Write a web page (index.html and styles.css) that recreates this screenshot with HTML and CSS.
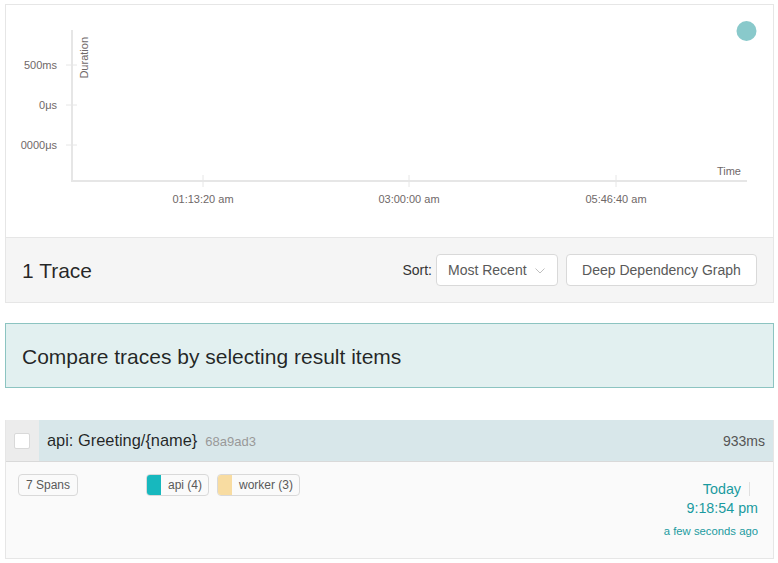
FILE: index.html
```html
<!DOCTYPE html>
<html>
<head>
<meta charset="utf-8">
<link rel="stylesheet" href="styles.css">
</head>
<body>
<div class="page">
  <section class="results-panel">
    <div class="chart">
      <svg width="767" height="232" viewBox="0 0 767 232">
        <g transform="translate(-6,-5)">
          <line x1="72" y1="30" x2="72" y2="182" class="axis"/>
          <line x1="71" y1="181" x2="747" y2="181" class="axis"/>
          <line x1="66" y1="65" x2="77" y2="65" class="tick"/>
          <line x1="66" y1="105" x2="77" y2="105" class="tick"/>
          <line x1="66" y1="145" x2="77" y2="145" class="tick"/>
          <line x1="203" y1="175" x2="203" y2="187" class="tick"/>
          <line x1="409" y1="175" x2="409" y2="187" class="tick"/>
          <line x1="616" y1="175" x2="616" y2="187" class="tick"/>
          <text x="57" y="69" text-anchor="end" class="lbl">500ms</text>
          <text x="57" y="109" text-anchor="end" class="lbl">0μs</text>
          <text x="57" y="149" text-anchor="end" class="lbl">0000μs</text>
          <text transform="translate(88,37) rotate(-90)" text-anchor="end" class="lbl">Duration</text>
          <text x="741" y="175" text-anchor="end" class="lbl">Time</text>
          <text x="203" y="203" text-anchor="middle" class="lbl">01:13:20 am</text>
          <text x="409" y="203" text-anchor="middle" class="lbl">03:00:00 am</text>
          <text x="616" y="203" text-anchor="middle" class="lbl">05:46:40 am</text>
          <circle cx="746.5" cy="31" r="10" class="dot"/>
        </g>
      </svg>
    </div>
    <div class="results-header">
      <h2 class="results-count">1 Trace</h2>
      <div class="results-actions">
        <span class="sort-label">Sort:</span>
        <div class="select">
          <span>Most Recent</span>
          <svg width="10" height="6" viewBox="0 0 10 6" class="chev"><path d="M0.5 0.5 L5 5 L9.5 0.5" fill="none" stroke="#bfbfbf" stroke-width="1"/></svg>
        </div>
        <button class="btn">Deep Dependency Graph</button>
      </div>
    </div>
  </section>

  <div class="compare-alert">Compare traces by selecting result items</div>

  <section class="trace-item">
    <div class="trace-head">
      <div class="check-col"><span class="checkbox"></span></div>
      <div class="trace-title">
        <span class="trace-name">api: Greeting/{name}</span>
        <span class="trace-id">68a9ad3</span>
      </div>
      <span class="trace-duration">933ms</span>
    </div>
    <div class="trace-body">
      <div class="col-spans"><span class="tag">7 Spans</span></div>
      <div class="col-services">
        <span class="tag svc"><i class="swatch api"></i>api (4)</span>
        <span class="tag svc"><i class="swatch worker"></i>worker (3)</span>
      </div>
      <div class="col-time">
        <div class="time-day"><span>Today</span><span class="divider"></span></div>
        <div class="time-clock">9:18:54 pm</div>
        <div class="time-ago">a few seconds ago</div>
      </div>
    </div>
  </section>
</div>
</body>
</html>
```

FILE: styles.css
```css
* { box-sizing: border-box; }
html, body { margin: 0; padding: 0; background: #fff; }
body {
  font-family: "Liberation Sans", Arial, sans-serif;
  color: rgba(0,0,0,0.85);
}
.page {
  padding: 4px 4px 0 5px;
}
.results-panel {
  border: 1px solid #e6e6e6;
  width: 769px;
}
.chart {
  height: 232px;
  background: #fff;
}
.chart svg { display: block; }
.axis { stroke: #e6e6e6; stroke-width: 2; }
.tick { stroke: #e6e6e6; stroke-width: 1; }
.lbl { font-family: "Liberation Sans", Arial, sans-serif; font-size: 11px; fill: #6f6868; }
.dot { fill: #89c9cb; }

.results-header {
  border-top: 1px solid #e6e6e6;
  background: #f5f5f5;
  height: 65px;
  display: flex;
  align-items: center;
  justify-content: space-between;
  padding: 0 16px 0 16px;
}
.results-count {
  margin: 0;
  font-size: 21px;
  font-weight: normal;
  color: rgba(0,0,0,0.85);
  padding-top: 2px;
}
.results-actions {
  display: flex;
  align-items: center;
}
.sort-label {
  font-size: 14px;
  color: #333;
  margin-right: 4px;
}
.select {
  width: 122px;
  height: 32px;
  background: #fff;
  border: 1px solid #d9d9d9;
  border-radius: 4px;
  display: flex;
  align-items: center;
  justify-content: space-between;
  padding: 0 12px 0 11px;
  font-size: 14px;
  color: #595959;
}
.chev { display: block; margin-top: 1px; }
.btn {
  margin-left: 8px;
  width: 191px;
  height: 32px;
  background: #fff;
  border: 1px solid #d9d9d9;
  border-radius: 4px;
  font-family: "Liberation Sans", Arial, sans-serif;
  font-size: 14px;
  color: #595959;
  padding: 0;
}

.compare-alert {
  margin-top: 20px;
  width: 769px;
  height: 65px;
  background: #e2f0f0;
  border: 1px solid #8cc4c1;
  display: flex;
  align-items: center;
  padding: 2px 16px 0;
  font-size: 21px;
  color: rgba(0,0,0,0.85);
}

.trace-item {
  margin-top: 32px;
  width: 769px;
  border: 1px solid #e6e6e6;
  border-top: none;
}
.trace-head {
  height: 42px;
  display: flex;
  align-items: center;
  background: #d8e7ea;
  border-bottom: 1px solid #d9d9d9;
}
.check-col {
  width: 33px;
  align-self: stretch;
  background: #ececec;
  display: flex;
  align-items: center;
  justify-content: center;
}
.checkbox {
  width: 16px;
  height: 16px;
  background: #fff;
  border: 1px solid #d9d9d9;
  border-radius: 2px;
  margin-right: 2px;
}
.trace-title {
  flex: 1;
  padding-left: 8px;
  display: flex;
  align-items: baseline;
}
.trace-name {
  font-size: 16.4px;
  color: rgba(0,0,0,0.85);
}
.trace-id {
  font-size: 13px;
  color: #999;
  margin-left: 8px;
}
.trace-duration {
  font-size: 14px;
  color: #555;
  padding-right: 8px;
}
.trace-body {
  background: #fafafa;
  height: 96px;
  display: flex;
  padding: 12px 15px 0 12px;
}
.tag {
  display: inline-flex;
  align-items: center;
  height: 22px;
  border: 1px solid #d9d9d9;
  border-radius: 4px;
  background: #fafafa;
  font-size: 12px;
  color: #595959;
  padding: 0 7px;
}
.col-spans { width: 128px; }
.col-services {
  flex: 1;
  display: flex;
  align-items: flex-start;
  gap: 8px;
}
.svc { padding: 0 6px 0 0; overflow: hidden; }
.swatch {
  display: inline-block;
  width: 14px;
  align-self: stretch;
  margin-right: 7px;
}
.swatch.api { background: #17b8be; }
.swatch.worker { background: #f8dca1; }
.col-time {
  text-align: right;
  color: #1a9aa0;
  display: flex;
  flex-direction: column;
  align-items: flex-end;
  padding-top: 5px;
}
.time-day {
  font-size: 14.3px;
  display: flex;
  align-items: center;
  height: 20px;
}
.divider {
  display: inline-block;
  width: 1px;
  height: 14px;
  background: #e0e0e0;
  margin-left: 8px;
  margin-right: 8px;
}
.time-clock {
  font-size: 14.3px;
  margin-top: 1px;
  height: 20px;
}
.time-ago {
  font-size: 11.3px;
  margin-top: 5px;
}
```
